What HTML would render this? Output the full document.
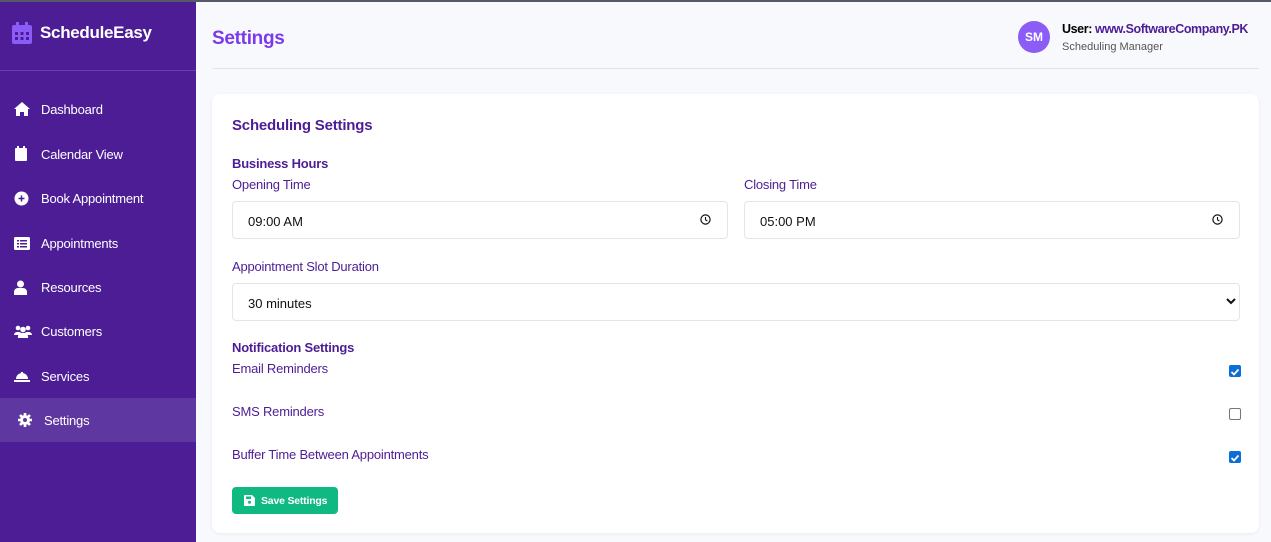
<!DOCTYPE html>
<html><head><meta charset="utf-8"><style>
*{margin:0;padding:0;box-sizing:border-box}
body{width:1271px;height:542px;overflow:hidden;background:#f8f9fc;font-family:"Liberation Sans",sans-serif;position:relative}
.topline{position:absolute;left:0;top:0;width:1271px;height:2px;background:#555b66}
.sb{position:absolute;left:0;top:2px;width:196px;height:540px;background:#4c1d95}
.logo{position:absolute;left:12px;top:20px;color:#fff;font-weight:bold;font-size:17px;letter-spacing:-0.3px;display:flex;align-items:center;gap:8px}
.sep{position:absolute;left:0;top:68px;width:196px;height:1px;background:#6440a8}
.nav{position:absolute;left:0;width:196px;height:44px;color:#fff;font-size:13px;letter-spacing:-0.2px;display:flex;align-items:center}
.nav svg{position:absolute;left:14px}
.nav span{position:absolute;left:41px}
.act{background:#5f37a0}
.abs{position:absolute}
.card{position:absolute;left:212px;top:94px;width:1047px;height:439px;background:#fff;border-radius:8px;box-shadow:0 1px 3px rgba(0,0,0,.06)}
.lbl{position:absolute;color:#4c1d95;font-size:13px;letter-spacing:-0.2px}
.b{font-weight:bold}
.inp{position:absolute;height:38px;border:1px solid #e3e5ea;border-radius:4px;background:#fff;font-size:13px;color:#111;padding-left:15px;line-height:40px}
.cb{position:absolute;left:1229px;width:12px;height:12px;border-radius:2px}
</style></head><body>
<div class="topline"></div>
<div class="sb">
<div class="logo"><svg width="20" height="22" viewBox="0 0 20 22"><rect x="0" y="3" width="20" height="19" rx="2" fill="#8b5cf6"/><rect x="4" y="0" width="3" height="5" fill="#8b5cf6"/><rect x="13" y="0" width="3" height="5" fill="#8b5cf6"/><g fill="#4c1d95"><rect x="3" y="10" width="3" height="3"/><rect x="8.5" y="10" width="3" height="3"/><rect x="14" y="10" width="3" height="3"/><rect x="3" y="15" width="3" height="3"/><rect x="8.5" y="15" width="3" height="3"/><rect x="14" y="15" width="3" height="3"/></g></svg>ScheduleEasy</div>
<div class="sep"></div>
<div class="nav" style="top:85px"><svg width="16" height="14" viewBox="0 0 16 14"><path d="M8 0L0 7h2v7h4v-4h4v4h4V7h2z" fill="#fff"/></svg><span>Dashboard</span></div>
<div class="nav" style="top:130px"><svg width="14" height="16" viewBox="0 0 14 16"><rect x="1" y="2" width="12" height="13" rx="1" fill="#fff"/><rect x="3" y="0" width="2" height="3" fill="#fff"/><rect x="9" y="0" width="2" height="3" fill="#fff"/></svg><span>Calendar View</span></div>
<div class="nav" style="top:174px"><svg width="15" height="15" viewBox="0 0 15 15"><circle cx="7.5" cy="7.5" r="7" fill="#fff"/><path d="M7.5 4.5v6M4.5 7.5h6" stroke="#4c1d95" stroke-width="1.5"/></svg><span>Book Appointment</span></div>
<div class="nav" style="top:219px"><svg width="16" height="13" viewBox="0 0 16 13"><rect width="16" height="13" rx="1.5" fill="#fff"/><g fill="#4c1d95"><rect x="3" y="3" width="2" height="1.5"/><rect x="6" y="3" width="7" height="1.5"/><rect x="3" y="6" width="2" height="1.5"/><rect x="6" y="6" width="7" height="1.5"/><rect x="3" y="9" width="2" height="1.5"/><rect x="6" y="9" width="7" height="1.5"/></g></svg><span>Appointments</span></div>
<div class="nav" style="top:263px"><svg width="13" height="15" viewBox="0 0 13 15"><circle cx="6.5" cy="4" r="3.5" fill="#fff"/><path d="M0 15v-3a4 4 0 014-4h5a4 4 0 014 4v3z" fill="#fff"/></svg><span>Resources</span></div>
<div class="nav" style="top:307px"><svg width="18" height="13" viewBox="0 0 18 13"><g fill="#fff"><circle cx="4" cy="3" r="2.3"/><circle cx="14" cy="3" r="2.3"/><circle cx="9" cy="4.5" r="2.8"/><path d="M0 10a3 3 0 013-3h2a3 3 0 013 3zM10 10a3 3 0 013-3h2a3 3 0 013 3zM4 13a4 4 0 014-5h2a4 4 0 014 5z"/></g></svg><span>Customers</span></div>
<div class="nav" style="top:352px"><svg width="16" height="12" viewBox="0 0 16 12"><path d="M2 9a6 6 0 0112 0zM7 2h2v2H7zM0 10h16v2H0z" fill="#fff"/></svg><span>Services</span></div>
<div class="nav act" style="top:396px"><svg width="14" height="14" viewBox="0 0 14 14" style="left:18px"><circle cx="7" cy="7" r="5" fill="#fff"/><g stroke="#fff" stroke-width="2.6"><path d="M7 0v14M0 7h14M2 2l10 10M12 2L2 12"/></g><circle cx="7" cy="7" r="2" fill="#5f37a0"/></svg><span style="left:44px">Settings</span></div>
</div>
<div class="abs" style="left:212px;top:28px;font-size:19px;font-weight:bold;color:#7c3aed;letter-spacing:-0.3px">Settings</div>
<div class="abs" style="left:212px;top:68px;width:1047px;height:1px;background:#e2e4ea"></div>
<div class="abs" style="left:1018px;top:21px;width:32px;height:32px;border-radius:50%;background:#8b5cf6;color:#fff;font-weight:bold;font-size:12px;text-align:center;line-height:32px">SM</div>
<div class="abs" style="left:1062px;top:22px;font-size:12.5px;font-weight:bold;color:#000;letter-spacing:-0.4px">User: <span style="color:#4c1d95">www.SoftwareCompany.PK</span></div>
<div class="abs" style="left:1062px;top:41px;font-size:11px;color:#555">Scheduling Manager</div>
<div class="card"></div>
<div class="lbl b" style="left:232px;top:117px;font-size:15px">Scheduling Settings</div>
<div class="lbl b" style="left:232px;top:156px">Business Hours</div>
<div class="lbl" style="left:232px;top:177px">Opening Time</div>
<div class="lbl" style="left:744px;top:177px">Closing Time</div>
<div class="inp" style="left:232px;top:201px;width:496px">09:00 AM</div>
<div class="inp" style="left:744px;top:201px;width:496px">05:00 PM</div>
<svg class="abs" style="left:700px;top:214px" width="11" height="11" viewBox="0 0 11 11"><circle cx="5.5" cy="5.5" r="4.6" fill="none" stroke="#111" stroke-width="1.2"/><path d="M5.5 3v2.8l1.8 1.2" fill="none" stroke="#111" stroke-width="1.1"/></svg>
<svg class="abs" style="left:1212px;top:214px" width="11" height="11" viewBox="0 0 11 11"><circle cx="5.5" cy="5.5" r="4.6" fill="none" stroke="#111" stroke-width="1.2"/><path d="M5.5 3v2.8l1.8 1.2" fill="none" stroke="#111" stroke-width="1.1"/></svg>
<div class="lbl" style="left:232px;top:259px">Appointment Slot Duration</div>
<div class="inp" style="left:232px;top:283px;width:1008px">30 minutes</div>
<svg class="abs" style="left:1226px;top:298px" width="10" height="7" viewBox="0 0 10 7"><path d="M1 1l4 4 4-4" fill="none" stroke="#111" stroke-width="2"/></svg>
<div class="lbl b" style="left:232px;top:340px">Notification Settings</div>
<div class="lbl" style="left:232px;top:361px">Email Reminders</div>
<div class="lbl" style="left:232px;top:404px">SMS Reminders</div>
<div class="lbl" style="left:232px;top:447px">Buffer Time Between Appointments</div>
<div class="cb" style="top:365px;background:#0b6fd6"><svg width="12" height="12" viewBox="0 0 12 12"><path d="M2.5 6l2.5 2.5 4.5-5" fill="none" stroke="#fff" stroke-width="1.8"/></svg></div>
<div class="cb" style="top:408px;border:1px solid #777;background:#fff"></div>
<div class="cb" style="top:451px;background:#0b6fd6"><svg width="12" height="12" viewBox="0 0 12 12"><path d="M2.5 6l2.5 2.5 4.5-5" fill="none" stroke="#fff" stroke-width="1.8"/></svg></div>
<div class="abs" style="left:232px;top:487px;width:106px;height:27px;border-radius:4px;background:#10b981;color:#fff;font-size:10.5px;font-weight:bold;line-height:28px;padding-left:29px;letter-spacing:-0.2px">Save Settings</div>
<svg class="abs" style="left:244px;top:495px" width="11" height="11" viewBox="0 0 11 11"><path d="M0 1a1 1 0 011-1h7l3 3v7a1 1 0 01-1 1H1a1 1 0 01-1-1z" fill="#fff"/><rect x="2" y="1.5" width="5" height="2.5" fill="#10b981"/><circle cx="5.5" cy="7.3" r="1.5" fill="#10b981"/></svg>
</body></html>
